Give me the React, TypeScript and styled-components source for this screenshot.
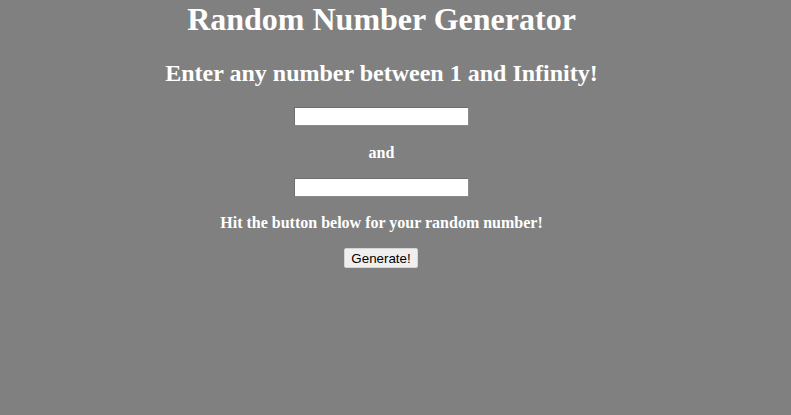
import React from "react";
import styled, { createGlobalStyle } from "styled-components";

const GlobalStyle = createGlobalStyle`
  html, body {
    margin: 0;
    padding: 0;
    background: #808080;
  }
  body {
    font-family: "Liberation Serif", "Times New Roman", serif;
    color: #ffffff;
  }
`;

const Page = styled.main`
  width: 763px;
  height: 415px;
  display: flex;
  flex-direction: column;
  align-items: center;
  text-align: center;
  padding-top: 1px;
  box-sizing: border-box;
`;

const Title = styled.h1`
  margin: 0;
  font-size: 32px;
  line-height: 36px;
  font-weight: bold;
`;

const Subtitle = styled.h2`
  margin: 23px 0 0;
  font-size: 24px;
  line-height: 26px;
  font-weight: bold;
`;

const NumberInput = styled.input<{ $top: number }>`
  margin: ${(p) => p.$top}px 0 0;
  width: 175px;
  height: 19px;
  box-sizing: border-box;
  background: #ffffff;
  border-style: solid;
  border-width: 1px;
  border-color: #6e6e6e #8a8a8a #8a8a8a #6e6e6e;
  padding: 0 2px;
  font-family: "Liberation Sans", Arial, sans-serif;
  font-size: 13.33px;
  outline: none;
`;

const Label = styled.p<{ $top: number }>`
  margin: ${(p) => p.$top}px 0 0;
  font-size: 16px;
  line-height: 17px;
  font-weight: bold;
`;

const Button = styled.button`
  margin: 17px 1px 0 0;
  width: 74px;
  height: 20px;
  box-sizing: border-box;
  padding: 0;
  background: #efefef;
  border: 1px solid #d4d4d4;
  border-radius: 2px;
  color: #000000;
  font-family: "Liberation Sans", Arial, sans-serif;
  font-size: 13.33px;
  cursor: pointer;
`;

export default function App() {
  return (
    <>
      <GlobalStyle />
      <Page>
        <Title>Random Number Generator</Title>
        <Subtitle>Enter any number between 1 and Infinity!</Subtitle>
        <NumberInput type="text" $top={21} />
        <Label $top={18}>and</Label>
        <NumberInput type="text" $top={17} />
        <Label $top={17}>Hit the button below for your random number!</Label>
        <Button type="button">Generate!</Button>
      </Page>
    </>
  );
}
